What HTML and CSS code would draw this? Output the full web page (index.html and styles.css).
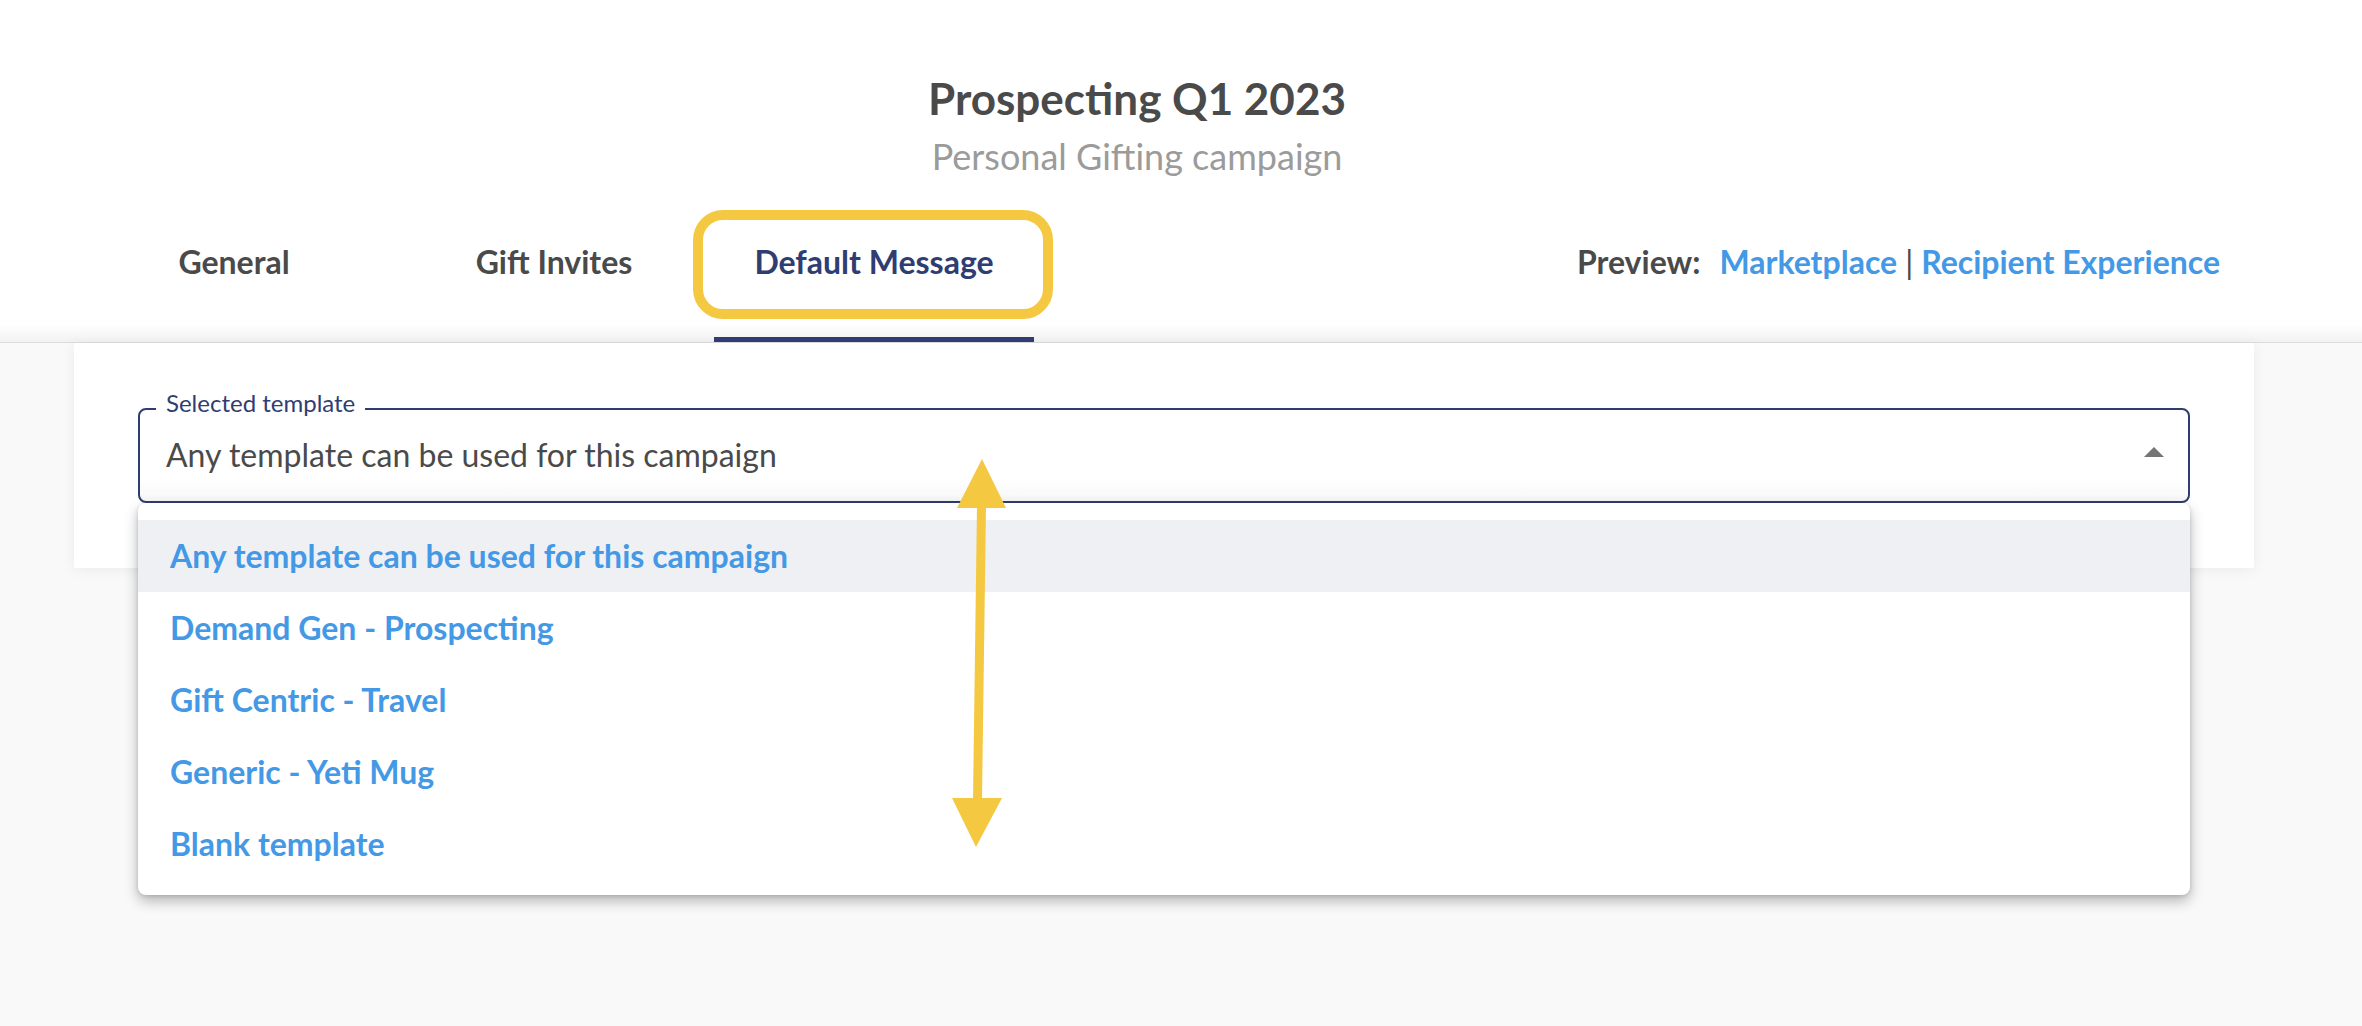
FILE: index.html
```html
<!DOCTYPE html>
<html lang="en">
<head>
<meta charset="utf-8">
<title>Prospecting Q1 2023</title>
<link rel="stylesheet" href="styles.css">
</head>
<body>
<header class="top">
  <div class="titles">
    <h1 class="title">Prospecting Q1 2023</h1>
    <p class="subtitle">Personal Gifting campaign</p>
  </div>
  <nav class="tabbar">
    <div class="tabs">
      <a class="tab">General</a>
      <a class="tab">Gift Invites</a>
      <a class="tab tab-active">Default Message<span class="focus-ring"></span></a>
    </div>
    <div class="preview">
      <span class="preview-label">Preview:</span>
      <a class="preview-link">Marketplace</a>
      <span class="pipe">|</span>
      <a class="preview-link">Recipient Experience</a>
    </div>
  </nav>
</header>
<main class="content">
  <section class="card">
    <div class="select">
      <div class="field">
        <span class="field-label">Selected template</span>
        <span class="field-value">Any template can be used for this campaign</span>
        <span class="caret"></span>
      </div>
      <ul class="menu">
        <li class="menu-item menu-item-active">Any template can be used for this campaign</li>
        <li class="menu-item">Demand Gen - Prospecting</li>
        <li class="menu-item">Gift Centric - Travel</li>
        <li class="menu-item">Generic - Yeti Mug</li>
        <li class="menu-item">Blank template</li>
      </ul>
    </div>
  </section>
</main>
<svg class="annot-arrow" width="80" height="410" viewBox="0 0 80 410" xmlns="http://www.w3.org/2000/svg">
  <polygon points="42,9 17,58 66,58" fill="#f5c842"/>
  <polygon points="37,55 46,55 42,350 33,350" fill="#f5c842"/>
  <polygon points="12,348 62,348 36,397" fill="#f5c842"/>
</svg>
</body>
</html>
```

FILE: styles.css
```css
* { box-sizing: border-box; }

html, body {
  margin: 0;
  padding: 0;
}

body {
  background: #f9f9f9;
  font-family: Lato, "Open Sans", "Liberation Sans", sans-serif;
  color: #4a4a4a;
  min-height: 1026px;
  position: relative;
}

.top {
  background: linear-gradient(to bottom, #ffffff calc(100% - 18px), #f2f2f2 100%);
  border-bottom: 1px solid #dcdcdc;
  padding-top: 72px;
}

.titles {
  text-align: center;
  padding-right: 88px;
}

.title {
  margin: 0;
  font-size: 44px;
  line-height: 52px;
  font-weight: 700;
  color: #4a4a4a;
}

.subtitle {
  margin: 10px 0 0;
  font-size: 36px;
  line-height: 44px;
  font-weight: 400;
  color: #9b9b9b;
}

.tabbar {
  margin-top: 32px;
  display: flex;
  justify-content: space-between;
  align-items: flex-start;
  padding: 0 142px 0 74px;
}

.tabs {
  display: flex;
}

.tab {
  position: relative;
  width: 320px;
  height: 132px;
  padding-top: 32px;
  text-align: center;
  font-size: 32px;
  line-height: 40px;
  font-weight: 700;
  color: #4a4a4a;
  border-bottom: 5px solid transparent;
}

.tab-active {
  color: #2f3d72;
  border-bottom-color: #2f3d72;
}

.focus-ring {
  position: absolute;
  left: -21px;
  top: 0;
  width: 360px;
  height: 109px;
  border: 10px solid #f5c842;
  border-radius: 30px;
}

.preview {
  padding-top: 32px;
  font-size: 32px;
  line-height: 40px;
  font-weight: 700;
  display: flex;
  white-space: pre;
}

.preview-label {
  color: #4a4a4a;
  margin-right: 19px;
}

.preview-link {
  color: #4499e6;
}

.pipe {
  font-weight: 400;
  color: #4a4a4a;
  margin: 0 8px;
}

.content {
  padding: 0 108px 0 74px;
}

.card {
  background: #ffffff;
  box-shadow: 0 2px 14px rgba(0, 0, 0, 0.06);
  padding: 65px 64px;
}

.select {
  position: relative;
}

.field {
  position: relative;
  display: flex;
  align-items: center;
  border: 2px solid #2f3d72;
  border-radius: 8px;
  padding: 27px 24px 28px 26px;
  background: linear-gradient(to bottom, #ffffff 75%, #f7f7f7 100%);
}

.field-label {
  position: absolute;
  left: 16px;
  top: -19px;
  padding: 0 10px;
  background: #ffffff;
  font-size: 24px;
  line-height: 24px;
  color: #2f3d72;
}

.field-value {
  flex: 1;
  font-size: 32px;
  line-height: 36px;
  color: #4a4a4a;
}

.caret {
  width: 0;
  height: 0;
  border-left: 10px solid transparent;
  border-right: 10px solid transparent;
  border-bottom: 10px solid #757575;
  margin-top: -6px;
}

.menu {
  position: absolute;
  left: 0;
  right: 0;
  top: 100%;
  margin: 0;
  padding: 17px 0 15px;
  list-style: none;
  background: #ffffff;
  border-radius: 8px;
  box-shadow: 0 6px 14px rgba(0, 0, 0, 0.28), 0 1px 4px rgba(0, 0, 0, 0.12);
}

.menu-item {
  height: 72px;
  line-height: 72px;
  padding-left: 32px;
  font-size: 32px;
  font-weight: 700;
  color: #4499e6;
}

.menu-item-active {
  background: #eff0f4;
}

.annot-arrow {
  position: absolute;
  left: 940px;
  top: 450px;
}
```
